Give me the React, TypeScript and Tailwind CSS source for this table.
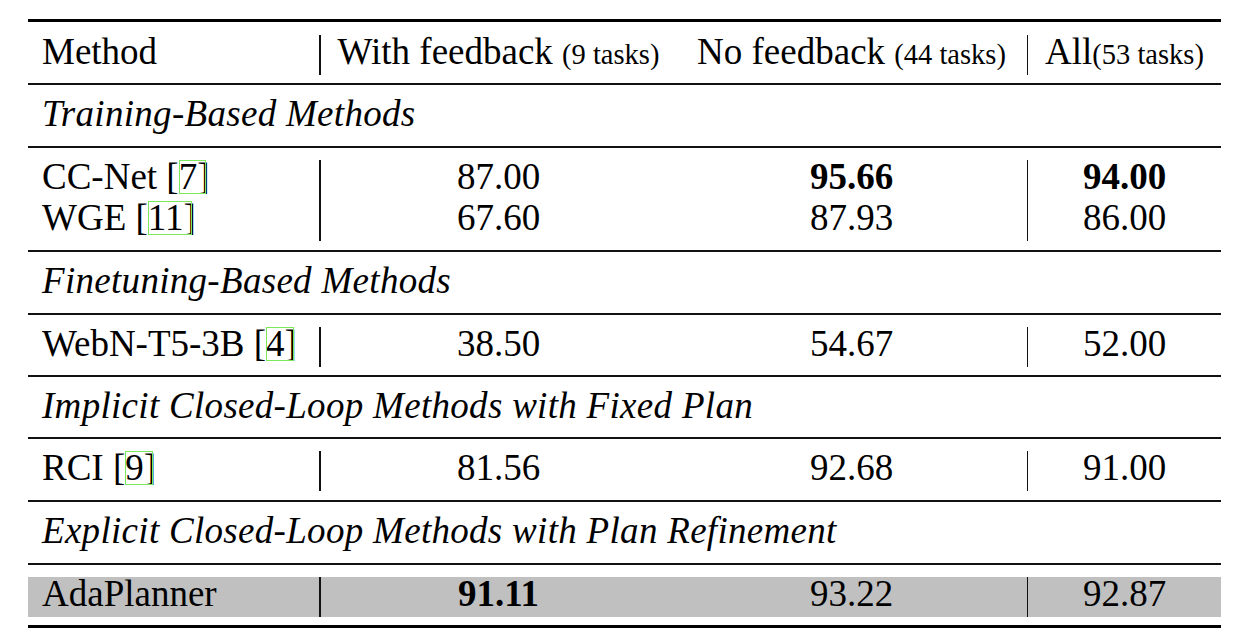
const serif = "font-['Liberation_Serif','Times_New_Roman',serif]";

function Cite({ n }: { n: string }) {
  return (
    <span className="relative">
      {n}
      <span className="absolute left-0 -right-[9px] top-[4px] bottom-[3px] border border-[#7ce85c]" />
    </span>
  );
}

function Rule({ thick }: { thick?: boolean }) {
  return <div className={thick ? "h-[3px] bg-black" : "h-[2px] bg-[#111]"} />;
}

function Bar() {
  return <div className="w-[1.5px] shrink-0 bg-[#111]" />;
}

function Section({ title, h }: { title: string; h: string }) {
  return (
    <div className={`${h} pt-[8px] pl-[14px] leading-[41px] italic tracking-[0.3px]`}>{title}</div>
  );
}

type Row = {
  method: React.ReactNode;
  a: string;
  b: string;
  c: string;
  bold?: ("a" | "b" | "c")[];
};

function DataRow({ rows, h, shaded }: { rows: Row[]; h: string; shaded?: boolean }) {
  const cell = (r: Row, k: "a" | "b" | "c") => (
    <div key={k} className={`leading-[33px] ${r.bold?.includes(k) ? "font-bold" : ""}`}>
      {r[k]}
    </div>
  );
  const col = (k: "a" | "b" | "c") => (
    <div className="flex flex-col gap-[8px]">{rows.map((r) => cell(r, k))}</div>
  );
  return (
    <div className={`${h} pt-[12px]`}>
      <div className={`flex ${rows.length > 1 ? "h-[81px]" : "h-[40px]"} ${shaded ? "bg-[#c0c0c0]" : ""}`}>
        <div className="w-[291px] shrink-0 pl-[14px] flex flex-col gap-[8px]">
          {rows.map((r, i) => (
            <div key={i} className="leading-[33px] whitespace-nowrap">{r.method}</div>
          ))}
        </div>
        <Bar />
        <div className="w-[356px] shrink-0 text-center">{col("a")}</div>
        <div className="w-[350px] shrink-0 text-center">{col("b")}</div>
        <Bar />
        <div className="flex-1 text-center">{col("c")}</div>
      </div>
    </div>
  );
}

export default function App() {
  return (
    <div className={`bg-white w-[1234px] h-[640px] pt-[19px] text-black text-[37px] ${serif}`}>
      <div className="ml-[28px] w-[1193px]">
        <Rule thick />
        {/* header */}
        <div className="h-[61px] pt-[13px]">
          <div className="flex h-[40px] whitespace-nowrap">
            <div className="w-[291px] shrink-0 pl-[14px] leading-[33px]">Method</div>
            <Bar />
            <div className="w-[356px] shrink-0 text-center leading-[33px]">
              With feedback <span className="text-[28.5px]">(9 tasks)</span>
            </div>
            <div className="w-[350px] shrink-0 text-center leading-[33px]">
              No feedback <span className="text-[28.5px]">(44 tasks)</span>
            </div>
            <Bar />
            <div className="flex-1 text-center leading-[33px]">
              All<span className="text-[28.5px]">(53 tasks)</span>
            </div>
          </div>
        </div>
        <Rule />
        <Section title="Training-Based Methods" h="h-[61px]" />
        <Rule />
        <DataRow
          h="h-[102px]"
          rows={[
            { method: <>CC-Net [<Cite n="7" />]</>, a: "87.00", b: "95.66", c: "94.00", bold: ["b", "c"] },
            { method: <>WGE [<Cite n="11" />]</>, a: "67.60", b: "87.93", c: "86.00" },
          ]}
        />
        <Rule />
        <Section title="Finetuning-Based Methods" h="h-[61px]" />
        <Rule />
        <DataRow
          h="h-[60px]"
          rows={[{ method: <>WebN-T5-3B [<Cite n="4" />]</>, a: "38.50", b: "54.67", c: "52.00" }]}
        />
        <Rule />
        <Section title="Implicit Closed-Loop Methods with Fixed Plan" h="h-[60px]" />
        <Rule />
        <DataRow
          h="h-[61px]"
          rows={[{ method: <>RCI [<Cite n="9" />]</>, a: "81.56", b: "92.68", c: "91.00" }]}
        />
        <Rule />
        <Section title="Explicit Closed-Loop Methods with Plan Refinement" h="h-[61px]" />
        <Rule />
        <DataRow
          h="h-[60px]"
          shaded
          rows={[{ method: "AdaPlanner", a: "91.11", b: "93.22", c: "92.87", bold: ["a"] }]}
        />
        <Rule thick />
      </div>
    </div>
  );
}
